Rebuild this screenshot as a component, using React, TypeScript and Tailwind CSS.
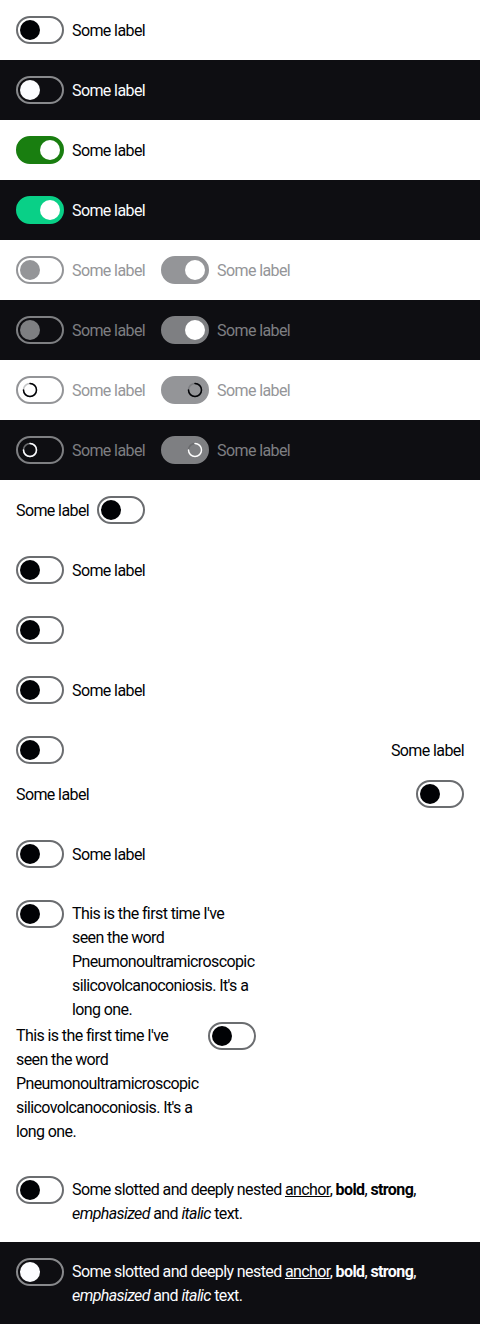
import React from "react";

type Theme = "light" | "dark";

const font = { fontFamily: "Roboto, 'Liberation Sans', sans-serif" };

function Spinner({ color, track }: { color: string; track: string }) {
  return (
    <svg width="16" height="16" viewBox="0 0 16 16" className="block">
      <circle cx="8" cy="8" r="6.5" fill="none" stroke={track} strokeWidth="1.5" />
      <path d="M8 1.5 A6.5 6.5 0 1 1 1.5 8" fill="none" stroke={color} strokeWidth="1.5" strokeLinecap="round" />
    </svg>
  );
}

function Switch({
  theme = "light",
  checked = false,
  disabled = false,
  loading = false,
}: {
  theme?: Theme;
  checked?: boolean;
  disabled?: boolean;
  loading?: boolean;
}) {
  const dark = theme === "dark";
  let box = "";
  let knob = "";
  if (disabled || loading) {
    if (checked) {
      box = dark ? "border-[#7e7f82] bg-[#7e7f82]" : "border-[#949598] bg-[#949598]";
      knob = loading ? "bg-transparent" : "bg-white";
    } else {
      box = dark ? "border-[#7e7f82]" : "border-[#949598]";
      knob = loading ? "bg-transparent" : dark ? "bg-[#7e7f82]" : "bg-[#949598]";
    }
  } else if (checked) {
    box = dark ? "border-[#09d087] bg-[#09d087]" : "border-[#197e10] bg-[#197e10]";
    knob = "bg-white";
  } else {
    box = dark ? "border-[#88898c]" : "border-[#6b6d70]";
    knob = dark ? "bg-[#fbfcff]" : "bg-[#010205]";
  }

  return (
    <span
      className={`flex h-7 w-12 shrink-0 items-center rounded-full border-2 px-[2px] ${box} ${
        checked ? "justify-end" : "justify-start"
      }`}
    >
      <span className={`flex h-5 w-5 items-center justify-center rounded-full ${knob}`}>
        {loading && (
          <Spinner
            color={dark ? (checked ? "#ffffff" : "#fbfcff") : "#010205"}
            track={dark ? "#6a6b6e" : checked ? "#7c7d80" : "#c4c5c7"}
          />
        )}
      </span>
    </span>
  );
}

function Label({ children, theme = "light", muted = false }: { children: React.ReactNode; theme?: Theme; muted?: boolean }) {
  const color = muted ? (theme === "dark" ? "text-[#7e7f82]" : "text-[#949598]") : theme === "dark" ? "text-[#fbfcff]" : "text-[#010205]";
  return <span className={`pt-[2px] text-base leading-6 tracking-[-0.6px] ${color}`}>{children}</span>;
}

function Row({ theme = "light", children }: { theme?: Theme; children: React.ReactNode }) {
  return (
    <div className={`flex items-center gap-4 p-4 ${theme === "dark" ? "bg-[#0e0e12]" : "bg-white"}`}>{children}</div>
  );
}

function Item({ children }: { children: React.ReactNode }) {
  return <div className="flex items-center gap-2">{children}</div>;
}

function RichText({ theme }: { theme: Theme }) {
  return (
    <span className={`mt-[2px] text-base leading-6 tracking-[-0.6px] ${theme === "dark" ? "text-[#fbfcff]" : "text-[#010205]"}`}>
      Some slotted and deeply nested <a className="underline">anchor</a>, <b>bold</b>, <strong>strong</strong>,{" "}
      <em>emphasized</em> and <i>italic</i> text.
    </span>
  );
}

export default function App() {
  return (
    <div className="w-[480px] bg-white" style={font}>
      <Row>
        <Item><Switch /><Label>Some label</Label></Item>
      </Row>
      <Row theme="dark">
        <Item><Switch theme="dark" /><Label theme="dark">Some label</Label></Item>
      </Row>
      <Row>
        <Item><Switch checked /><Label>Some label</Label></Item>
      </Row>
      <Row theme="dark">
        <Item><Switch theme="dark" checked /><Label theme="dark">Some label</Label></Item>
      </Row>

      <Row>
        <Item><Switch disabled /><Label muted>Some label</Label></Item>
        <Item><Switch disabled checked /><Label muted>Some label</Label></Item>
      </Row>
      <Row theme="dark">
        <Item><Switch theme="dark" disabled /><Label theme="dark" muted>Some label</Label></Item>
        <Item><Switch theme="dark" disabled checked /><Label theme="dark" muted>Some label</Label></Item>
      </Row>
      <Row>
        <Item><Switch loading /><Label muted>Some label</Label></Item>
        <Item><Switch loading checked /><Label muted>Some label</Label></Item>
      </Row>
      <Row theme="dark">
        <Item><Switch theme="dark" loading /><Label theme="dark" muted>Some label</Label></Item>
        <Item><Switch theme="dark" loading checked /><Label theme="dark" muted>Some label</Label></Item>
      </Row>

      <Row>
        <Item><Label>Some label</Label><Switch /></Item>
      </Row>
      <Row>
        <Item><Switch /><Label>Some label</Label></Item>
      </Row>
      <Row>
        <Switch />
      </Row>
      <Row>
        <Item><Switch /><Label>Some label</Label></Item>
      </Row>

      <div className="flex flex-col gap-4 p-4">
        <div className="flex items-center justify-between">
          <Switch />
          <Label>Some label</Label>
        </div>
        <div className="flex items-center justify-between">
          <Label>Some label</Label>
          <Switch />
        </div>
      </div>

      <Row>
        <Item><Switch /><Label>Some label</Label></Item>
      </Row>

      <div className="flex w-[272px] flex-col p-4">
        <div className="flex items-start gap-2">
          <Switch />
          <span className="mt-[2px] text-base leading-6 tracking-[-0.6px] text-[#010205]">
            This is the first time I've seen the word Pneumonoultramicroscopic silicovolcanoconiosis. It's a long one.
          </span>
        </div>
        <div className="flex items-start gap-2">
          <span className="mt-[2px] min-w-0 flex-1 text-base leading-6 tracking-[-0.6px] text-[#010205]">
            This is the first time I've seen the word Pneumonoultramicroscopic silicovolcanoconiosis. It's a long one.
          </span>
          <Switch />
        </div>
      </div>

      <div className="flex items-start gap-2 bg-white p-4">
        <Switch />
        <RichText theme="light" />
      </div>
      <div className="flex items-start gap-2 bg-[#0e0e12] p-4">
        <Switch theme="dark" />
        <RichText theme="dark" />
      </div>
    </div>
  );
}
